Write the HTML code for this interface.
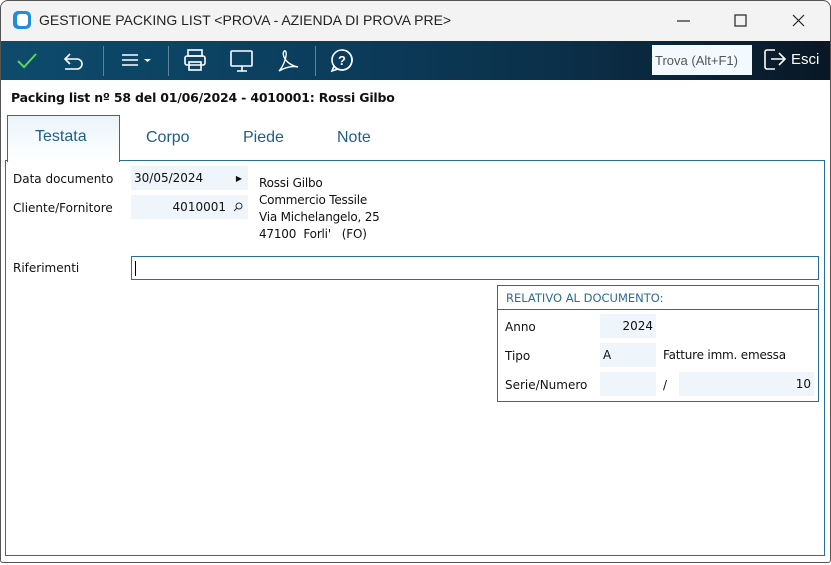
<!DOCTYPE html><html><head><style>
*{margin:0;padding:0;box-sizing:border-box}
body{width:831px;height:565px;background:#fff;font-family:"DejaVu Sans","Liberation Sans",sans-serif;position:relative;overflow:hidden;font-size:12px;color:#111}
.a{position:absolute}
.win{left:0;top:0;width:831px;height:563px;border-radius:8px 8px 3px 3px;overflow:hidden;background:#fff}
.frame{left:0;top:0;width:831px;height:563px;border:1px solid #555;border-radius:8px 8px 3px 3px;z-index:9}
.title{left:0;top:0;width:831px;height:41px;background:#f3f3f3}
.tb{left:0;top:41px;width:831px;height:39px;background:linear-gradient(90deg,#0d4b6c 0%,#0b3d5c 40%,#0b2e47 70%,#091725 100%)}
.sep{top:46px;width:1px;height:30px;background:#5f8298}
.f{background:#eef5fb}
.tab{top:137px;font-size:16px;color:#1f5f86;font-family:"Liberation Sans",sans-serif}
</style></head><body>
<div class="a win">
<div class="a title"></div>
<div class="a" style="left:13px;top:11px;width:18px;height:18px;border-radius:5px;background:#1e8fd8"></div>
<div class="a" style="left:17px;top:14px;width:11px;height:12px;border-radius:3px;background:#fff"></div>
<div class="a" style="left:39px;top:12px;font-size:14px;font-family:'Liberation Sans',sans-serif;color:#222">GESTIONE PACKING LIST &lt;PROVA - AZIENDA DI PROVA PRE&gt;</div>
<svg class="a" style="left:670px;top:10px" width="140" height="22"><path d="M7 11h13" stroke="#222" stroke-width="1.2"/><rect x="65" y="5" width="11" height="11" fill="none" stroke="#222" stroke-width="1.2"/><path d="M123 5l11 11M134 5l-11 11" stroke="#222" stroke-width="1.2"/></svg>
<div class="a tb"></div>
<svg class="a" style="left:0;top:41px" width="370" height="39" fill="none" stroke="#fff" stroke-width="1.6">
<path d="M18 20l6 6 12-13" stroke="#5fd35f" stroke-width="2"/>
<path d="M70 13l-5 5 5 5M65 18h12a5 5 0 0 1 0 10h-12"/>
<path d="M122 14h16M122 19h16M122 24h16"/><path d="M144 18h7l-3.5 3z" fill="#fff" stroke="none"/>
<rect x="188" y="9" width="14" height="6"/><rect x="185" y="15" width="20" height="9" rx="2"/><rect x="189" y="21" width="12" height="8"/>
<rect x="231" y="10" width="21" height="15" rx="1"/><path d="M237 30h10M242 25v5"/>
<path d="M279 30c4-4 8-14 7-19-1-3-4 0-2 5 2 5 8 9 14 10-5-1-12 0-19 4z" stroke-width="1.4"/>
<path d="M342 9a10 10 0 1 1-8 16l-2 5 6-2a10 10 0 0 0 4 1" /><circle cx="342" cy="19" r="10"/>
<text x="338" y="24" fill="#fff" stroke="none" font-size="13" font-weight="bold" font-family="Liberation Sans">?</text>
</svg>
<div class="a sep" style="left:103px"></div><div class="a sep" style="left:168px"></div><div class="a sep" style="left:315px"></div>
<div class="a" style="left:652px;top:45px;width:100px;height:30px;background:#f2f9ff;color:#555;font-size:13px;padding:8px 3px;font-family:'Liberation Sans',sans-serif">Trova (Alt+F1)</div>
<svg class="a" style="left:763px;top:47px" width="26" height="26" fill="none" stroke="#fff" stroke-width="1.6"><path d="M12 3H4a2 2 0 0 0-2 2v15a2 2 0 0 0 2 2h8"/><path d="M8 12h14M16 6l6 6-6 6"/></svg>
<div class="a" style="left:791px;top:51px;color:#fff;font-size:15px;font-family:'Liberation Sans',sans-serif">Esci</div>
<div class="a" style="left:11px;top:90px;font-size:12.5px;font-weight:bold;letter-spacing:-0.2px">Packing list nº 58 del 01/06/2024 - 4010001: Rossi Gilbo</div>
<div class="a" style="left:7px;top:115px;width:113px;height:47px;border:1px solid #2c6d93;border-bottom:none;background:linear-gradient(#eaf4fb,#fff);z-index:2"></div>
<div class="a tab" style="left:35px;top:128px;z-index:3">Testata</div>
<div class="a tab" style="left:146px;top:129px">Corpo</div>
<div class="a tab" style="left:243px;top:129px">Piede</div>
<div class="a tab" style="left:337px;top:129px">Note</div>
<div class="a" style="left:5px;top:160px;width:820px;height:396px;border:1px solid #2c6d93"></div>
<div class="a" style="left:13px;top:172px">Data documento</div>
<div class="a f" style="left:131px;top:166px;width:117px;height:24px;padding:5px 3px">30/05/2024<span style="position:absolute;right:6px;font-size:8px;top:8px">▶</span></div>
<div class="a" style="left:13px;top:201px">Cliente/Fornitore</div>
<div class="a f" style="left:131px;top:195px;width:117px;height:24px;padding:5px 22px;text-align:right">4010001</div>
<svg class="a" style="left:233px;top:202px" width="10" height="10" fill="none" stroke="#333"><circle cx="6" cy="4" r="3"/><path d="M4 6l-3 3"/></svg>
<div class="a" style="left:259px;top:175px;line-height:17px;font-size:12px;letter-spacing:-0.2px">Rossi Gilbo<br>Commercio Tessile<br>Via Michelangelo, 25<br>47100&nbsp; Forli'&nbsp;&nbsp; (FO)</div>
<div class="a" style="left:13px;top:261px">Riferimenti</div>
<div class="a" style="left:131px;top:256px;width:688px;height:24px;border:1px solid #2c6d93"><div style="position:absolute;left:3px;top:4px;width:1px;height:15px;background:#000"></div></div>
<div class="a" style="left:497px;top:285px;width:322px;height:117px;border:1px solid #2c6d93"></div>
<div class="a" style="left:497px;top:309px;width:322px;height:1px;background:#2c6d93"></div>
<div class="a" style="left:506px;top:291px;color:#2c6d93;font-size:11.5px">RELATIVO AL DOCUMENTO:</div>
<div class="a" style="left:505px;top:320px">Anno</div>
<div class="a f" style="left:600px;top:314px;width:56px;height:24px;padding:5px 3px;text-align:right">2024</div>
<div class="a" style="left:505px;top:349px">Tipo</div>
<div class="a f" style="left:600px;top:343px;width:56px;height:24px;padding:5px 3px">A</div>
<div class="a" style="left:663px;top:348px;font-size:12px;letter-spacing:-0.2px">Fatture imm. emessa</div>
<div class="a" style="left:505px;top:378px">Serie/Numero</div>
<div class="a f" style="left:600px;top:372px;width:56px;height:24px"></div>
<div class="a" style="left:663px;top:378px">/</div>
<div class="a f" style="left:679px;top:372px;width:135px;height:24px;padding:5px 3px;text-align:right">10</div>
</div>
<div class="a frame"></div>
</body></html>
